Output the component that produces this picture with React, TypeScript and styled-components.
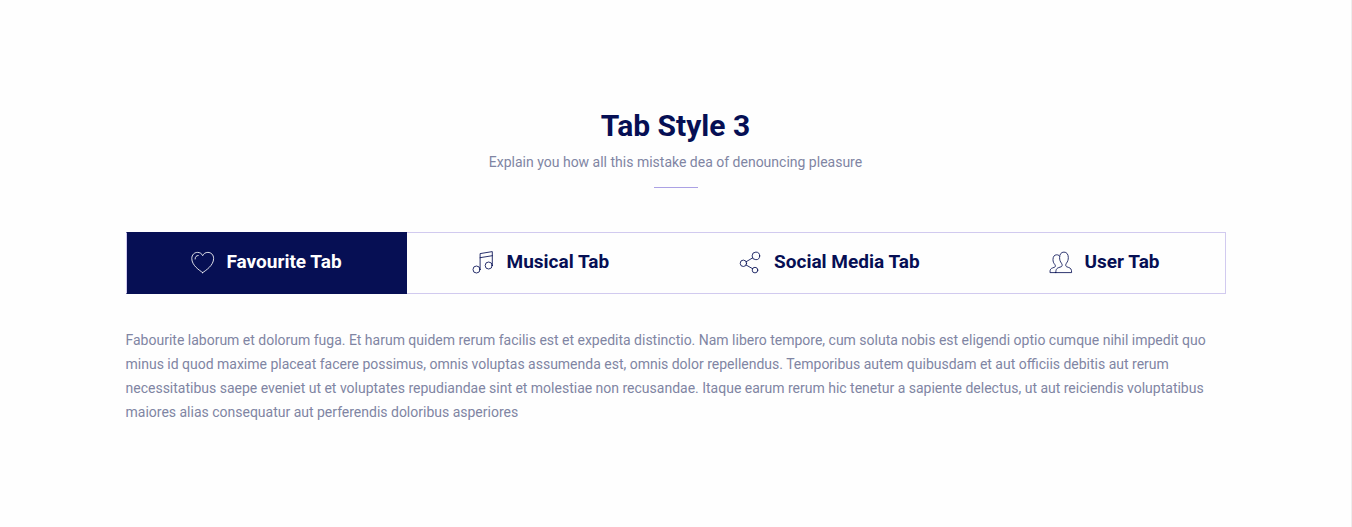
import React, { useState } from 'react';
import styled, { createGlobalStyle, css } from 'styled-components';

const navy = '#060f54';
const lavender = '#d1caef';
const muted = '#8085a3';

const GlobalStyle = createGlobalStyle`
  *, *::before, *::after { box-sizing: border-box; }
  body {
    margin: 0;
    background: #fefefe;
    color: ${muted};
    font-family: Roboto, "Liberation Sans", sans-serif;
    font-size: 14px;
    line-height: 24px;
  }
`;

const Page = styled.main`
  height: 527px;
  padding-top: 107px;
  border-right: 1px solid #eeeeee;
  overflow: hidden;
`;

const Container = styled.div`
  width: 1100px;
  margin: 0 auto;
`;

const Heading = styled.header`
  display: flex;
  flex-direction: column;
  align-items: center;
`;

const Title = styled.h2`
  margin: 0;
  color: ${navy};
  font-size: 30px;
  font-weight: 700;
  line-height: 38px;
`;

const Subtitle = styled.p`
  margin: 5px 0 0;
`;

const Divider = styled.span`
  width: 44px;
  height: 1px;
  margin-top: 13px;
  background: #aba1e4;
`;

const TabList = styled.div`
  display: flex;
  margin-top: 44px;
`;

const Tab = styled.button<{ $active: boolean }>`
  flex: 1 1 auto;
  display: flex;
  align-items: center;
  justify-content: center;
  gap: 11px;
  height: 62px;
  padding: 0 0 2px;
  border: 0 solid ${lavender};
  border-width: 1px 0;
  background: transparent;
  color: ${navy};
  font: 700 19px/24px Roboto, "Liberation Sans", sans-serif;
  cursor: pointer;

  &:first-child { border-left-width: 1px; }
  &:last-child { border-right-width: 1px; }

  ${({ $active }) =>
    $active &&
    css`
      border-top-color: ${navy};
      border-bottom-color: ${navy};
      background: ${navy};
      color: #fff;
    `}
`;

const Icon = styled.svg`
  flex: none;
  width: 24px;
  height: 24px;
  margin-top: 2px;
  overflow: visible;
  fill: none;
  stroke: currentColor;
  stroke-opacity: 0.9;
  stroke-width: 0.95;
  stroke-linecap: round;
  stroke-linejoin: round;
`;

const Panel = styled.p`
  margin: 34px 0 0;
  word-spacing: -0.035px;
`;

const panelText =
  'laborum et dolorum fuga. Et harum quidem rerum facilis est et expedita distinctio. Nam libero tempore, cum soluta nobis est eligendi optio cumque nihil impedit quo minus id quod maxime placeat facere possimus, omnis voluptas assumenda est, omnis dolor repellendus. Temporibus autem quibusdam et aut officiis debitis aut rerum necessitatibus saepe eveniet ut et voluptates repudiandae sint et molestiae non recusandae. Itaque earum rerum hic tenetur a sapiente delectus, ut aut reiciendis voluptatibus maiores alias consequatur aut perferendis doloribus asperiores';

const tabs = [
  {
    label: 'Favourite Tab',
    lead: 'Fabourite',
    icon: (
      <>
        <path d="M11.7 21.6C8.4 19.3.8 14.4.8 7.5.8 3.9 3.2 1.4 6.5 1.4c2.4 0 4.3 1.2 5.2 3.3.9-2.1 2.8-3.3 5.2-3.3 3.3 0 5.7 2.5 5.7 6.1 0 6.9-7.6 11.8-10.9 14.1Z" />
        <path d="M4.1 8c0-2.2 1.2-3.5 3.1-3.5" />
      </>
    ),
  },
  {
    label: 'Musical Tab',
    lead: 'Musical',
    icon: (
      <>
        <circle cx="4.5" cy="18.5" r="3.5" />
        <circle cx="16.7" cy="14.5" r="3.5" />
        <path d="M8.1 18.5V2.6L20.3.6v13.9M8.1 6.7l12.2-2" />
      </>
    ),
  },
  {
    label: 'Social Media Tab',
    lead: 'Social',
    icon: (
      <>
        <circle cx="4.4" cy="12.3" r="3.2" />
        <circle cx="16.9" cy="4.9" r="3.8" />
        <circle cx="16" cy="19.1" r="2.8" />
        <path d="m7.2 10.7 6.4-3.8M7.1 14l6.5 3.7" />
      </>
    ),
  },
  {
    label: 'User Tab',
    lead: 'User',
    icon: (
      <g transform="translate(-.7 0) scale(.97 1)">
        <path d="M6.7 21.6H23c0-3.6-.9-4.4-3-5.1l-2.2-.8c-1.1-.4-1.1-2.3-.2-3.4 1.4-1.7 2-3.5 2-5.8 0-3.1-1.6-5.4-4.5-5.4s-4.5 2.3-4.5 5.4c0 2.3.6 4.1 2 5.8.9 1.1.9 3-.2 3.4l-2.4.8c-2.2.7-3.3 1.5-3.3 5.1Z" />
        <path d="M6.7 21.6H.7c0-3.4.8-4 2.8-4.7l2-.7c1-.4 1-1.8.2-2.7-1.3-1.5-1.9-2.9-1.9-4.9 0-2.9 1.3-4.8 3.8-4.8 1.3 0 2.2.4 2.8 1.2" />
      </g>
    ),
  },
];

export default function App() {
  const [active, setActive] = useState(0);

  return (
    <>
      <GlobalStyle />
      <Page>
        <Container>
          <Heading>
            <Title>Tab Style 3</Title>
            <Subtitle>Explain you how all this mistake dea of denouncing pleasure</Subtitle>
            <Divider />
          </Heading>
          <TabList role="tablist">
            {tabs.map((tab, index) => (
              <Tab
                key={tab.label}
                role="tab"
                aria-selected={index === active}
                $active={index === active}
                onClick={() => setActive(index)}
              >
                <Icon viewBox="0 0 24 24" aria-hidden="true">
                  {tab.icon}
                </Icon>
                {tab.label}
              </Tab>
            ))}
          </TabList>
          <Panel role="tabpanel">{`${tabs[active].lead} ${panelText}`}</Panel>
        </Container>
      </Page>
    </>
  );
}
